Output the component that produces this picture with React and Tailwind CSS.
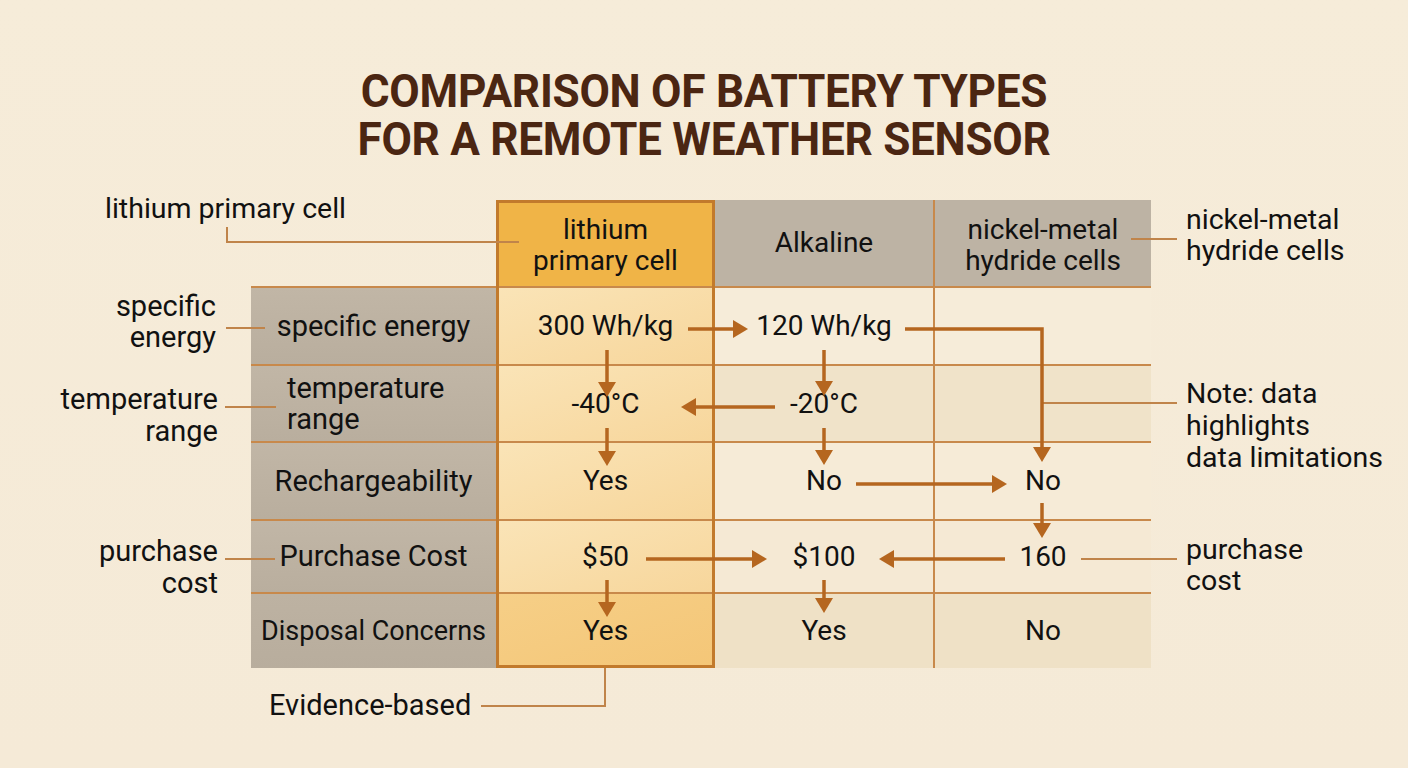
import React from "react";

const ARROW = "#b5661f";
const THIN = "#c0844a";

function Arrow({ pts }) {
  const n = pts.length;
  const [x1, y1] = pts[n - 2];
  const [x2, y2] = pts[n - 1];
  const dx = x2 - x1;
  const dy = y2 - y1;
  const len = Math.hypot(dx, dy);
  const ux = dx / len;
  const uy = dy / len;
  const hl = 15;
  const hw = 9;
  const bx = x2 - ux * hl;
  const by = y2 - uy * hl;
  const linePts = pts.slice(0, n - 1).concat([[bx + ux * 2, by + uy * 2]]);
  const head = [
    [x2, y2],
    [bx - uy * hw, by + ux * hw],
    [bx + uy * hw, by - ux * hw],
  ];
  return (
    <g>
      <polyline
        points={linePts.map((p) => p.join(",")).join(" ")}
        fill="none"
        stroke={ARROW}
        strokeWidth="3.5"
        strokeLinejoin="miter"
      />
      <polygon points={head.map((p) => p.join(",")).join(" ")} fill={ARROW} />
    </g>
  );
}

function Line({ pts }) {
  return (
    <polyline
      points={pts.map((p) => p.join(",")).join(" ")}
      fill="none"
      stroke={THIN}
      strokeWidth="2"
    />
  );
}

const labelCell =
  "bg-gradient-to-b from-[#c1b6a6] to-[#b9ae9e] border-b-2 border-[#c8894b] flex items-center justify-center text-[29px] leading-[31px] text-[#111]";
const litCell =
  "bg-gradient-to-br from-[#fae4b7] to-[#f7d69b] border-b-2 border-[#c8894b] flex items-center justify-center text-[28px] text-[#111]";
const valCell =
  "border-b-2 border-[#c8894b] flex items-center justify-center text-[28px] text-[#111]";

export default function App() {
  return (
    <div className="relative w-[1408px] h-[768px] overflow-hidden bg-gradient-to-b from-[#f6ecd9] to-[#f5ead7] font-['Roboto','Liberation_Sans',sans-serif] text-[#111]">
      <h1 className="pt-[67px] text-center text-[46px] leading-[48px] font-bold text-[#4b2612] tracking-[-0.3px] scale-x-[0.96]">
        COMPARISON OF BATTERY TYPES
        <br />
        FOR A REMOTE WEATHER SENSOR
      </h1>

      <div className="mt-[37px] grid grid-cols-[251px_245px_219px_218px_218px_1fr] grid-rows-[88px_78px_77px_78px_73px_74px_100px]">
        {/* header row */}
        <div className="col-start-1 col-span-2 row-start-1 pl-[105px] -mt-[7px] text-[28.5px] leading-[31px] whitespace-nowrap">
          lithium primary cell
        </div>
        <div className="col-start-2 row-start-1 border-b-2 border-[#c8894b]" />
        <div className="col-start-3 row-start-1 bg-[#f0b447] border-b-2 border-[#c8894b] flex flex-col items-center justify-center pt-[4px] text-[28px] leading-[31px] text-center">
          <span>lithium</span>
          <span>primary cell</span>
        </div>
        <div className="col-start-4 row-start-1 bg-[#bdb3a4] border-b-2 border-[#c8894b] flex items-center justify-center text-[28px]">
          Alkaline
        </div>
        <div className="col-start-5 row-start-1 bg-[#bdb3a4] border-b-2 border-l-2 border-[#c8894b] flex flex-col items-center justify-center pt-[4px] text-[28px] leading-[31px] text-center">
          <span>nickel-metal</span>
          <span>hydride cells</span>
        </div>
        <div className="col-start-6 row-start-1 pl-[35px] pt-[4px] text-[28.5px] leading-[31px] whitespace-nowrap">
          nickel-metal
          <br />
          hydride cells
        </div>

        {/* row 1: specific energy */}
        <div className="col-start-1 row-start-2 pr-[35px] pt-[3px] text-right text-[29px] leading-[31px]">
          specific
          <br />
          energy
        </div>
        <div className={`col-start-2 row-start-2 ${labelCell}`}>specific energy</div>
        <div className={`col-start-3 row-start-2 ${litCell}`}>300 Wh/kg</div>
        <div className={`col-start-4 row-start-2 bg-[#f6ecd9] ${valCell}`}>120 Wh/kg</div>
        <div className={`col-start-5 row-start-2 bg-[#f6ecd9] border-l-2 ${valCell}`} />

        {/* row 2: temperature range */}
        <div className="col-start-1 row-start-3 pr-[33px] pt-[17px] text-right text-[29px] leading-[32px]">
          temperature
          <br />
          range
        </div>
        <div className={`col-start-2 row-start-3 ${labelCell} !justify-start pl-[36px]`}>
          <span>
            temperature
            <br />
            range
          </span>
        </div>
        <div className={`col-start-3 row-start-3 ${litCell}`}>-40°C</div>
        <div className={`col-start-4 row-start-3 bg-[#f0e3c9] ${valCell}`}>-20°C</div>
        <div className={`col-start-5 row-start-3 bg-[#f0e3c9] border-l-2 ${valCell}`} />
        <div className="col-start-6 row-start-3 row-span-2 pl-[35px] pt-[12px] text-[28.5px] leading-[32px] whitespace-nowrap">
          Note: data
          <br />
          highlights
          <br />
          data limitations
        </div>

        {/* row 3: rechargeability */}
        <div className={`col-start-2 row-start-4 ${labelCell}`}>Rechargeability</div>
        <div className={`col-start-3 row-start-4 ${litCell}`}>Yes</div>
        <div className={`col-start-4 row-start-4 bg-[#f6ebd7] ${valCell}`}>No</div>
        <div className={`col-start-5 row-start-4 bg-[#f6ebd7] border-l-2 ${valCell}`}>No</div>

        {/* row 4: purchase cost */}
        <div className="col-start-1 row-start-5 pr-[33px] pt-[14px] text-right text-[29px] leading-[32px]">
          purchase
          <br />
          cost
        </div>
        <div className={`col-start-2 row-start-5 ${labelCell}`}>Purchase Cost</div>
        <div className={`col-start-3 row-start-5 ${litCell}`}>$50</div>
        <div className={`col-start-4 row-start-5 bg-[#f5e9d4] ${valCell}`}>$100</div>
        <div className={`col-start-5 row-start-5 bg-[#f5e9d4] border-l-2 ${valCell}`}>160</div>
        <div className="col-start-6 row-start-5 pl-[35px] pt-[13px] text-[28.5px] leading-[31px]">
          purchase
          <br />
          cost
        </div>

        {/* row 5: disposal */}
        <div className="col-start-2 row-start-6 bg-gradient-to-b from-[#bdb2a2] to-[#b8ad9d] flex items-center justify-center text-[27px] whitespace-nowrap">
          Disposal Concerns
        </div>
        <div className="col-start-3 row-start-6 bg-gradient-to-br from-[#f6cf87] to-[#f4c677] flex items-center justify-center text-[28px]">
          Yes
        </div>
        <div className="col-start-4 row-start-6 bg-[#efe1c6] flex items-center justify-center text-[28px]">
          Yes
        </div>
        <div className="col-start-5 row-start-6 bg-[#efe1c6] border-l-2 border-[#c8894b] flex items-center justify-center text-[28px]">
          No
        </div>

        {/* lithium column frame */}
        <div className="col-start-3 row-start-1 row-span-6 border-[3px] border-[#c27a2c] pointer-events-none" />

        {/* bottom */}
        <div className="col-start-2 col-span-2 row-start-7 pl-[18px] pt-[22px] text-[29px] leading-[31px] whitespace-nowrap">
          Evidence-based
        </div>
      </div>

      <svg
        className="absolute inset-0 pointer-events-none"
        width="1408"
        height="768"
        viewBox="0 0 1408 768"
      >
        <Line pts={[[227, 227], [227, 242], [519, 242]]} />
        <Line pts={[[226, 328], [265, 328]]} />
        <Line pts={[[225, 407], [276, 407]]} />
        <Line pts={[[225, 559], [275, 559]]} />
        <Line pts={[[1131, 239], [1177, 239]]} />
        <Line pts={[[1042, 403], [1177, 403]]} />
        <Line pts={[[1081, 559], [1177, 559]]} />
        <Line pts={[[605, 668], [605, 706], [481, 706]]} />

        <Arrow pts={[[688, 329], [748, 329]]} />
        <Arrow pts={[[905, 329], [1042, 329], [1042, 462]]} />
        <Arrow pts={[[607, 350], [607, 397]]} />
        <Arrow pts={[[824, 350], [824, 396]]} />
        <Arrow pts={[[775, 407], [681, 407]]} />
        <Arrow pts={[[607, 428], [607, 466]]} />
        <Arrow pts={[[824, 428], [824, 465]]} />
        <Arrow pts={[[856, 484], [1007, 484]]} />
        <Arrow pts={[[1042, 503], [1042, 538]]} />
        <Arrow pts={[[646, 559], [767, 559]]} />
        <Arrow pts={[[1005, 559], [879, 559]]} />
        <Arrow pts={[[607, 580], [607, 617]]} />
        <Arrow pts={[[824, 580], [824, 613]]} />
      </svg>
    </div>
  );
}
